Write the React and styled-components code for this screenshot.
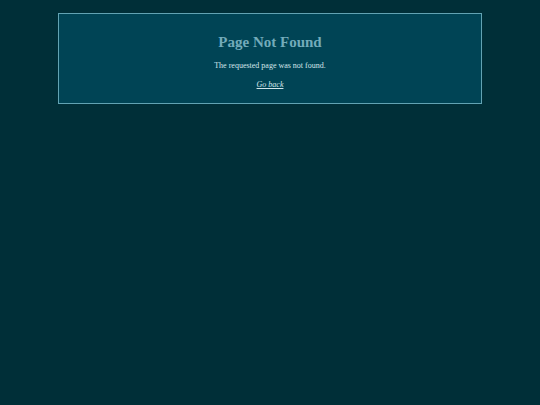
import React from "react";
import styled, { createGlobalStyle } from "styled-components";

const Global = createGlobalStyle`
  html, body { margin: 0; padding: 0; background: #002f38; }
  body { font-family: "Liberation Serif", "DejaVu Serif", serif; min-height: 405px; }
`;

const Page = styled.main`
  padding: 13px 58px;
`;

const Card = styled.section`
  box-sizing: border-box;
  width: 424px;
  height: 91px;
  background: #004455;
  border: 1px solid #62a3b3;
  display: flex;
  flex-direction: column;
  align-items: center;
  padding-top: 19px;
`;

const Title = styled.h1`
  margin: 0;
  font-size: 15px;
  font-weight: bold;
  line-height: 18px;
  color: #73abba;
`;

const Message = styled.p`
  margin: 10px 0 0;
  font-size: 8px;
  line-height: 10px;
  color: #d3e6ea;
`;

const BackLink = styled.a`
  margin-top: 9px;
  font-size: 8px;
  line-height: 10px;
  font-style: italic;
  color: #d3e6ea;
  text-decoration: underline;
  &:visited { color: #d3e6ea; }
`;

export default function App() {
  return (
    <>
      <Global />
      <Page>
        <Card>
          <Title>Page Not Found</Title>
          <Message>The requested page was not found.</Message>
          <BackLink href="#">Go back</BackLink>
        </Card>
      </Page>
    </>
  );
}
